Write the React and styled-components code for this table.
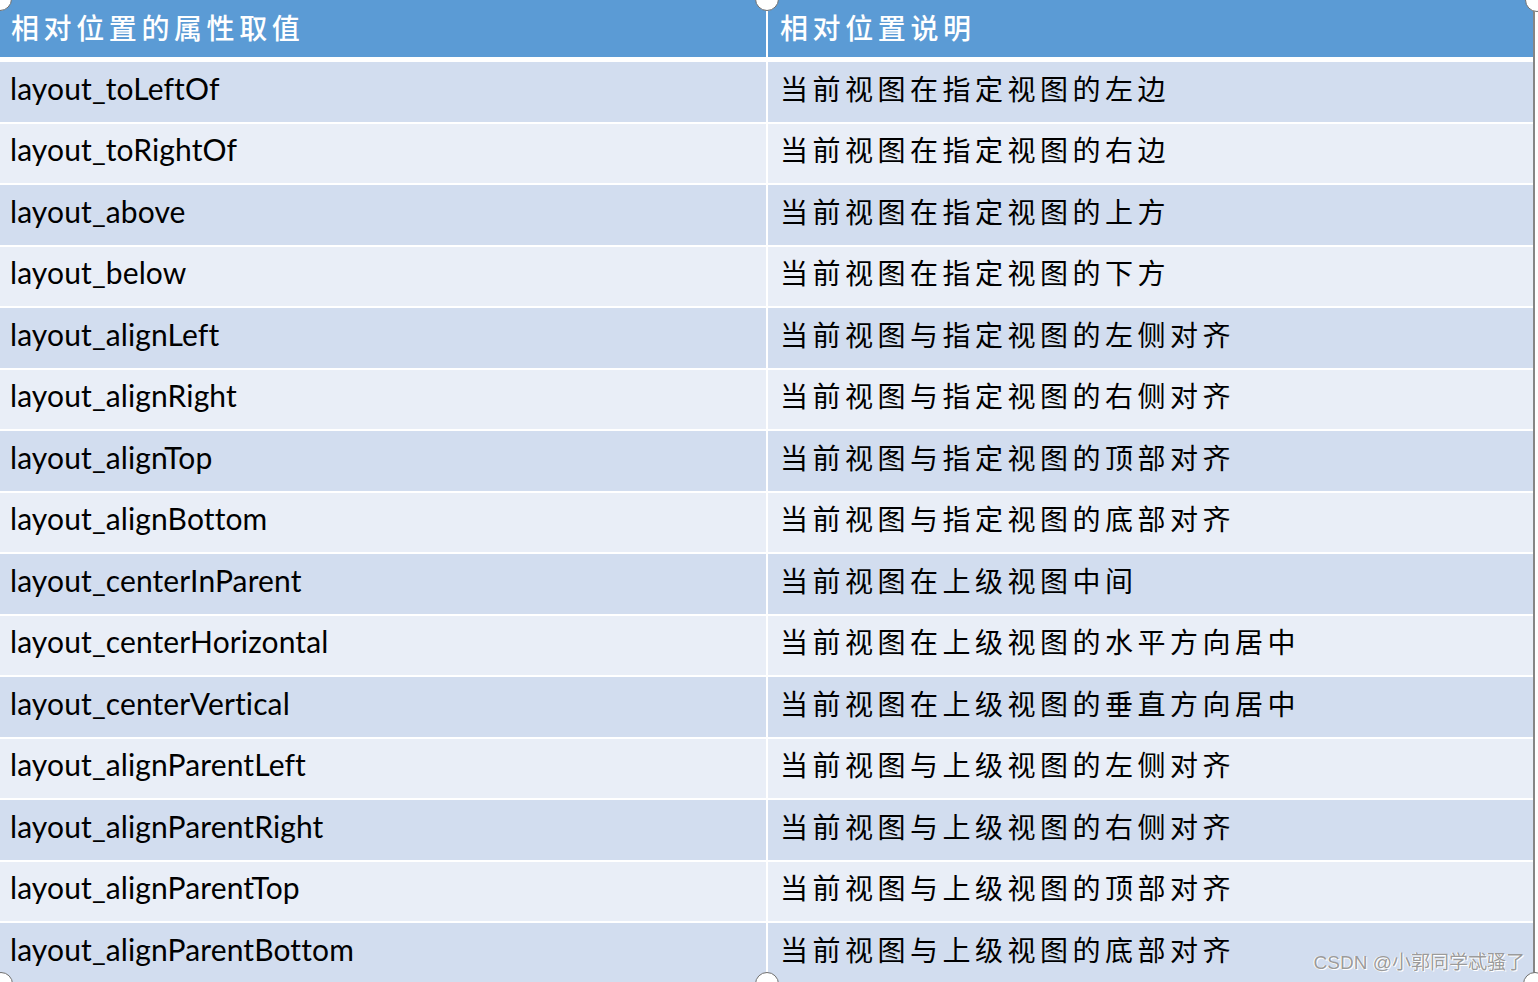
import styled, { createGlobalStyle } from "styled-components";

const rows = [
  ["layout_toLeftOf", "当前视图在指定视图的左边"],
  ["layout_toRightOf", "当前视图在指定视图的右边"],
  ["layout_above", "当前视图在指定视图的上方"],
  ["layout_below", "当前视图在指定视图的下方"],
  ["layout_alignLeft", "当前视图与指定视图的左侧对齐"],
  ["layout_alignRight", "当前视图与指定视图的右侧对齐"],
  ["layout_alignTop", "当前视图与指定视图的顶部对齐"],
  ["layout_alignBottom", "当前视图与指定视图的底部对齐"],
  ["layout_centerInParent", "当前视图在上级视图中间"],
  ["layout_centerHorizontal", "当前视图在上级视图的水平方向居中"],
  ["layout_centerVertical", "当前视图在上级视图的垂直方向居中"],
  ["layout_alignParentLeft", "当前视图与上级视图的左侧对齐"],
  ["layout_alignParentRight", "当前视图与上级视图的右侧对齐"],
  ["layout_alignParentTop", "当前视图与上级视图的顶部对齐"],
  ["layout_alignParentBottom", "当前视图与上级视图的底部对齐"],
];

// selection handles around the pasted picture
const handles = [
  [0, -1],
  [767, -1],
  [1537, 0],
  [1, 984],
  [767, 984],
  [1535, 984],
];

const App = () => {
  return (
    <>
      <GlobalStyle />
      <Frame>
        <Table>
          <HeadCell $first>相对位置的属性取值</HeadCell>
          <HeadCell>相对位置说明</HeadCell>
          <Spacer />
          {rows.map(([name, desc], i) => (
            <Row key={name} $alt={i % 2 === 1}>
              <NameCell>{name}</NameCell>
              <DescCell>{desc}</DescCell>
            </Row>
          ))}
        </Table>
        <Watermark>CSDN @小郭同学忒骚了</Watermark>
        {handles.map(([x, y], i) => (
          <Handle key={i} style={{ left: x - 12, top: y - 12 }} />
        ))}
      </Frame>
    </>
  );
};

const GlobalStyle = createGlobalStyle`
  html, body {
    margin: 0;
    padding: 0;
    background: #ffffff;
    overflow: hidden;
  }
`;

const Frame = styled.div`
  position: relative;
  width: 1538px;
  height: 982px;
  overflow: hidden;
  background: #ffffff;
`;

const Table = styled.div`
  display: grid;
  grid-template-columns: 766px 765px;
  column-gap: 2px;
  width: 1533px;
  border-right: 2px solid #858585;
  height: 1000px;
  align-content: start;
`;

const HeadCell = styled.div`
  height: 57px;
  background: #5b9bd5;
  color: #ffffff;
  display: flex;
  align-items: center;
  padding-left: ${(p) => (p.$first ? "11px" : "12px")};
  padding-bottom: 4px;
  box-sizing: border-box;
  font-family: "Noto Sans CJK SC", sans-serif;
  font-weight: 500;
  font-size: 28px;
  letter-spacing: 4.6px;
`;

const Spacer = styled.div`
  grid-column: 1 / -1;
  height: 5px;
`;

const Row = styled.div`
  display: contents;
  & > div {
    background: ${(p) => (p.$alt ? "#e9eef7" : "#d2ddef")};
  }
`;

const BaseCell = styled.div`
  height: 59.5px;
  margin-bottom: 2px;
  display: flex;
  align-items: center;
  box-sizing: border-box;
  padding-bottom: 8px;
  color: #000000;
`;

const NameCell = styled(BaseCell)`
  padding-left: 10px;
  font-family: Lato, "Open Sans", sans-serif;
  font-size: 30px;
  letter-spacing: 0.12px;
`;

const DescCell = styled(BaseCell)`
  padding-left: 12px;
  font-family: "Noto Sans CJK SC", sans-serif;
  font-weight: 400;
  font-size: 28px;
  letter-spacing: 4.5px;
`;

const Watermark = styled.div`
  position: absolute;
  right: 13px;
  bottom: 8px;
  font-family: "Liberation Sans", "Noto Sans CJK SC", sans-serif;
  font-size: 19px;
  color: #9b9b9b;
  text-shadow: 1px 1px 0 #ffffff, -1px 0 0 #ffffff;
`;

const Handle = styled.div`
  position: absolute;
  width: 22px;
  height: 22px;
  border-radius: 50%;
  background: #ffffff;
  border: 1px solid #6e6e6e;
`;

export default App;
